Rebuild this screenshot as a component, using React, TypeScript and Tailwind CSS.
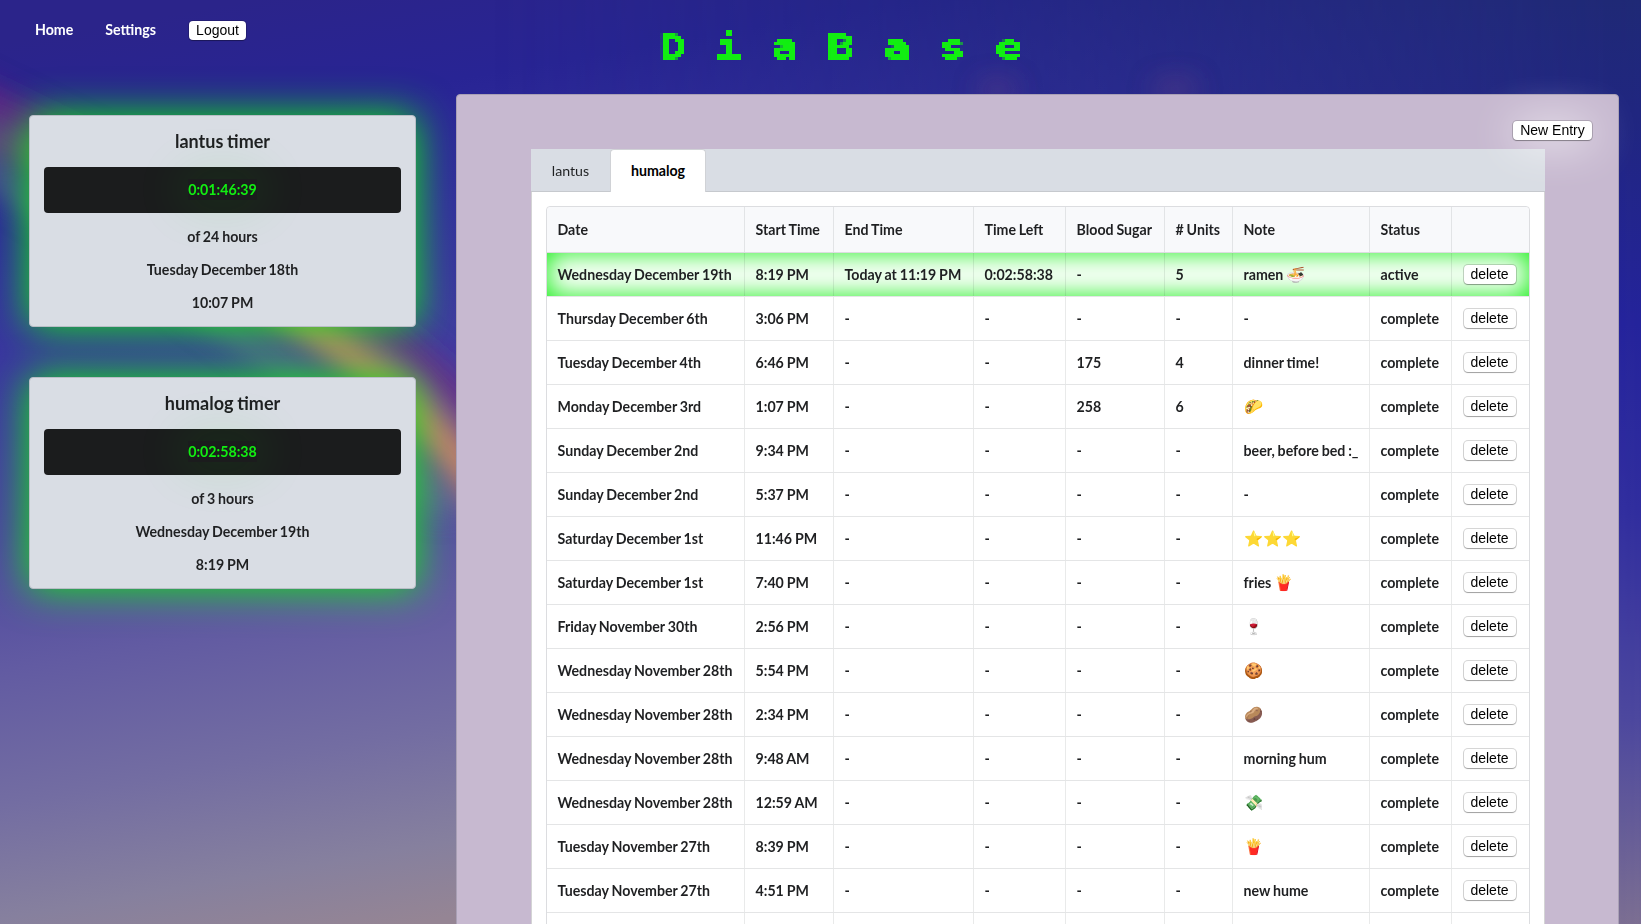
import type { ReactNode } from "react";

type Entry = {
  date: string;
  start: string;
  end?: string;
  left?: string;
  sugar?: string;
  units?: string;
  note?: string;
  emoji?: string;
  status: string;
};

const entries: Entry[] = [
  { date: "Wednesday December 19th", start: "8:19 PM", end: "Today at 11:19 PM", left: "0:02:58:38", units: "5", note: "ramen ", emoji: "🍜", status: "active" },
  { date: "Thursday December 6th", start: "3:06 PM", note: "-", status: "complete" },
  { date: "Tuesday December 4th", start: "6:46 PM", sugar: "175", units: "4", note: "dinner time!", status: "complete" },
  { date: "Monday December 3rd", start: "1:07 PM", sugar: "258", units: "6", emoji: "🌮", status: "complete" },
  { date: "Sunday December 2nd", start: "9:34 PM", note: "beer, before bed :_", status: "complete" },
  { date: "Sunday December 2nd", start: "5:37 PM", note: "-", status: "complete" },
  { date: "Saturday December 1st", start: "11:46 PM", emoji: "⭐⭐⭐", status: "complete" },
  { date: "Saturday December 1st", start: "7:40 PM", note: "fries ", emoji: "🍟", status: "complete" },
  { date: "Friday November 30th", start: "2:56 PM", emoji: "🍷", status: "complete" },
  { date: "Wednesday November 28th", start: "5:54 PM", emoji: "🍪", status: "complete" },
  { date: "Wednesday November 28th", start: "2:34 PM", emoji: "🥔", status: "complete" },
  { date: "Wednesday November 28th", start: "9:48 AM", note: "morning hum", status: "complete" },
  { date: "Wednesday November 28th", start: "12:59 AM", emoji: "💸", status: "complete" },
  { date: "Tuesday November 27th", start: "8:39 PM", emoji: "🍟", status: "complete" },
  { date: "Tuesday November 27th", start: "4:51 PM", note: "new hume", status: "complete" },
];

const columns = "grid grid-cols-[198px_89px_140px_92px_99px_68px_137px_82px_77px]";
const headings = ["Date", "Start Time", "End Time", "Time Left", "Blood Sugar", "# Units", "Note", "Status", ""];

function Cell({ children, last }: { children?: ReactNode; last?: boolean }) {
  return (
    <div className={`flex items-center whitespace-pre pl-[10.5px] ${last ? "" : "border-r border-[#22242619]"}`}>
      {children}
    </div>
  );
}

function SmallButton({ children, className = "" }: { children: ReactNode; className?: string }) {
  return (
    <button
      className={`flex h-[19px] items-center justify-center rounded-[4px] bg-white font-['Liberation_Sans',sans-serif] text-[14px] font-normal text-black shadow-[0_0_0_1px_rgba(0,0,0,0.16),0_1px_1px_rgba(0,0,0,0.25)] [word-spacing:0px] ${className}`}
    >
      {children}
    </button>
  );
}

function Row({ entry }: { entry: Entry }) {
  const active = entry.status === "active";
  return (
    <div
      className={`${columns} h-11 border-b border-[#e4e5e6] ${active ? "shadow-[inset_0_0_27px_0_#12ee12]" : ""}`}
    >
      <Cell>{entry.date}</Cell>
      <Cell>{entry.start}</Cell>
      <Cell>{entry.end ?? "-"}</Cell>
      <Cell>{entry.left ?? "-"}</Cell>
      <Cell>{entry.sugar ?? "-"}</Cell>
      <Cell>{entry.units ?? "-"}</Cell>
      <Cell>
        {entry.note}
        {entry.emoji && <span className="text-[15.4px] leading-none">{entry.emoji}</span>}
      </Cell>
      <Cell>{entry.status}</Cell>
      <Cell last>
        <SmallButton className="ml-px w-[52px]">delete</SmallButton>
      </Cell>
    </div>
  );
}

function TimerCard({ name, time, total, date, start }: { name: string; time: string; total: string; date: string; start: string }) {
  return (
    <section className="flex h-[212px] flex-col items-center rounded-[4px] border border-[#b9bec6] bg-[#d9dde4] px-[14px] text-[#1f2022] shadow-[0_0_40px_0_#12ee12]">
      <h2 className="mt-[13px] text-[18px] leading-6 font-bold">{name}</h2>
      <div className="mt-[14px] flex h-[46px] w-full items-center justify-center rounded-[4px] bg-[#1b1c1d] pb-px text-[#12ee12]">
        <span className="shadow-[0_0_50px_8px_rgba(18,238,18,0.1)]">{time}</span>
      </div>
      <p className="mt-[12px] leading-6">{total}</p>
      <p className="mt-[9px] leading-6">{date}</p>
      <p className="mt-[9px] leading-6">{start}</p>
    </section>
  );
}

function Backdrop() {
  return (
    <svg className="absolute inset-0 -z-10 h-full w-full" viewBox="0 0 1641 924" preserveAspectRatio="none">
      <defs>
        <linearGradient id="sky" gradientUnits="userSpaceOnUse" x1="250" y1="0" x2="410" y2="924">
          <stop offset="0" stopColor="#2b248a" />
          <stop offset="0.12" stopColor="#282494" />
          <stop offset="0.25" stopColor="#332f9e" />
          <stop offset="0.4" stopColor="#403ca0" />
          <stop offset="0.52" stopColor="#4c479f" />
          <stop offset="0.66" stopColor="#625ba2" />
          <stop offset="0.8" stopColor="#736da2" />
          <stop offset="0.92" stopColor="#86809e" />
          <stop offset="1" stopColor="#958594" />
        </linearGradient>
        <linearGradient id="east" x1="0" y1="0" x2="0" y2="1">
          <stop offset="0" stopColor="#1f2975" />
          <stop offset="0.12" stopColor="#20267f" />
          <stop offset="0.35" stopColor="#24239b" />
          <stop offset="0.55" stopColor="#302d9e" />
          <stop offset="0.78" stopColor="#4c479e" />
          <stop offset="1" stopColor="#7b6e92" />
        </linearGradient>
        <linearGradient id="fade" x1="0" y1="0" x2="1" y2="0">
          <stop offset="0.3" stopColor="#fff" stopOpacity="0" />
          <stop offset="1" stopColor="#fff" />
        </linearGradient>
        <mask id="eastMask">
          <rect width="1641" height="924" fill="url(#fade)" />
        </mask>
        <filter id="soft" x="-50%" y="-50%" width="200%" height="200%">
          <feGaussianBlur stdDeviation="14" />
        </filter>
        <filter id="mosaic" x="0" y="0" width="100%" height="100%" colorInterpolationFilters="sRGB">
          <feFlood x="1" y="1" width="1" height="1" floodColor="#000" />
          <feComposite width="3" height="3" />
          <feTile result="dots" />
          <feComposite in="SourceGraphic" in2="dots" operator="in" />
          <feMorphology operator="dilate" radius="1" />
          <feComponentTransfer>
            <feFuncA type="linear" slope="4" intercept="-1.4" />
          </feComponentTransfer>
        </filter>
      </defs>
      <rect width="1641" height="924" fill="url(#sky)" />
      <rect width="1641" height="924" fill="url(#east)" mask="url(#eastMask)" />
      <g filter="url(#soft)" fill="none" strokeLinecap="round">
        <path d="M-40 88 C150 180 340 270 500 440" stroke="#7a2a80" strokeWidth="30" opacity="0.75" />
        <path d="M-30 132 L60 168" stroke="#94705c" strokeWidth="22" opacity="0.65" />
        <path d="M80 195 C190 250 360 325 500 510" stroke="#d08a62" strokeWidth="36" opacity="0.95" />
        <path d="M-40 156 C120 255 270 340 440 505" stroke="#6f9a82" strokeWidth="22" opacity="0.5" />
        <path d="M985 90 L1010 90 M1160 90 L1190 88" stroke="#9a5080" strokeWidth="12" opacity="0.5" />
      </g>
    </svg>
  );
}

export default function App() {
  return (
    <div className="relative isolate h-[924px] w-full overflow-hidden font-['Lato',sans-serif] text-[14.2px] font-bold text-[#1f2022] [word-spacing:-0.6px]">
      <Backdrop />
      <header className="grid h-[94px] grid-cols-[456px_1fr]">
        <nav className="flex h-[60px] items-center pl-[35px] text-white">
          <a>Home</a>
          <a className="ml-[32px]">Settings</a>
          <SmallButton className="ml-[33px] w-[57px]">Logout</SmallButton>
        </nav>
        <h1 className="flex h-[94px] items-center pl-[203px] font-['DejaVu_Sans_Mono',monospace] text-[34px] leading-none font-bold text-[#12ee12] [-webkit-text-stroke:0.6px_#12ee12] [filter:url(#mosaic)]">
          {"DiaBase".split("").map((letter, i) => (
            <span key={i} className="w-14">
              <span className="inline-block origin-left scale-x-[1.34]">{letter}</span>
            </span>
          ))}
        </h1>
      </header>
      <div className="flex">
        <aside className="flex w-[456px] shrink-0 flex-col gap-[50px] pt-[21px] pr-[40px] pl-[29px]">
          <TimerCard name="lantus timer" time="0:01:46:39" total="of 24 hours" date="Tuesday December 18th" start="10:07 PM" />
          <TimerCard name="humalog timer" time="0:02:58:38" total="of 3 hours" date="Wednesday December 19th" start="8:19 PM" />
        </aside>
        <main className="h-[900px] w-[1163px] rounded-t-[4px] border border-[#a9a0b5] bg-[#c7b9d0] pl-[74px]">
          <div className="flex h-[54px] items-start justify-end pt-[26px] pr-[26px]">
            <div className="relative z-20 rounded-[4px] shadow-[0_3px_44px_0_rgba(255,255,255,0.95)]">
              <SmallButton className="w-[79px]">New Entry</SmallButton>
            </div>
          </div>
          <div className="w-[1014px]">
            <div className="flex h-[43px] border-b border-[#c6c9ce] bg-[#d9dde4]">
              <div className="flex w-[79px] items-center justify-center pt-px font-normal">lantus</div>
              <div className="z-10 mb-[-1px] flex w-[96px] items-center justify-center rounded-t-[4px] border border-b-0 border-[#d0d2d6] bg-white text-black">humalog</div>
            </div>
            <div className="h-[800px] border-x border-[#d4d4d5] bg-white px-[14px] pt-[14px]">
              <div className="h-[780px] rounded-t-[4px] border border-[#dcdde0]">
                <div className={`${columns} h-[46px] rounded-t-[4px] border-b border-[#dcdde0] bg-[#f8f9fb]`}>
                  {headings.map((heading, i) => (
                    <Cell key={i} last={i === headings.length - 1}>{heading}</Cell>
                  ))}
                </div>
                {entries.map((entry, i) => (
                  <Row key={i} entry={entry} />
                ))}
                <div className={`${columns} h-11`}>
                  {headings.map((_, i) => (
                    <Cell key={i} last={i === headings.length - 1} />
                  ))}
                </div>
              </div>
            </div>
          </div>
        </main>
      </div>
    </div>
  );
}
